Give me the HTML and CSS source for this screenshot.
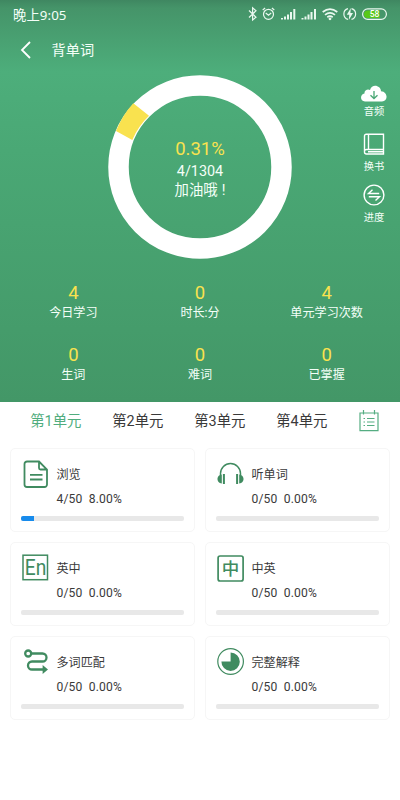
FILE: index.html
```html
<!DOCTYPE html>
<html lang="zh-CN">
<head>
<meta charset="utf-8">
<meta name="viewport" content="width=device-width, initial-scale=1">
<title>背单词</title>
<link rel="stylesheet" href="styles.css">
</head>
<body>
<section class="hero">
  <div class="status">
    <span class="clock">晚上9:05</span>
    <svg class="status-icons" width="144" height="16" viewBox="0 0 144 16" fill="none" stroke="#e9f8ef" stroke-width="1.2">
      <path d="M1 4.5l7 6.7L4.6 14V1.8L8 4.8l-7 6.7"/>
      <circle cx="20.500" cy="8.300" r="5"/><path d="M17.700 7l2.800 2.200L23.200 7M14.700 4l2.400-2M26.300 4l-2.400-2"/>
      <path stroke-width="2" d="M34 13.500v-1.500M37 13.500v-3M40 13.500v-5M43 13.500v-7.500M46.300 13.500V3M54.500 13.500v-1.500M57.500 13.500v-3M60.500 13.500v-5M63.500 13.500v-7.500M67 13.500V3"/>
      <path stroke-width="1.700" d="M74.700 6q7.300-5.600 14.600 0M77 8.800q5-4 10 0M79.300 11.200q2.700-2 5.400 0"/><circle cx="82" cy="12.800" r=".8" fill="#e9f8ef"/>
      <path d="M100 2.600a5.600 5.600 0 0 0 0 10.800M103.500 2.600a5.600 5.600 0 0 1 0 10.800"/><path stroke="none" fill="#e9f8ef" d="M102.800 2l-4 6.700h2.500L100.800 14l4.200-7h-2.600z"/>
      <rect x="114.600" y="2.900" width="23.800" height="10.500" rx="5.200"/>
      <path stroke="none" fill="#58c818" d="M116 8.200a3.800 3.800 0 0 1 3.800-3.800H131.500V12H119.800A3.800 3.800 0 0 1 116 8.200z"/>
      <text class="battery" x="126.500" y="11.300" text-anchor="middle">58</text>
    </svg>
  </div>
  <header class="bar">
    <svg width="12" height="18" viewBox="0 0 12 18" fill="none" stroke="#fff" stroke-width="1.800"><path d="M10 1L2 9l8 8"/></svg>
    <h1>背单词</h1>
  </header>
  <div class="overview">
    <div class="ring">
      <svg width="184" height="184" viewBox="-92 -92 184 184" fill="none">
        <circle r="81.500" stroke="#fff" stroke-width="20.500"/>
        <path fill="#f9e24f" d="M-84-36A92 92 0 0 1-66.700-63.700L-51-51.300A72 72 0 0 0-67.700-27z"/>
      </svg>
      <div class="ring-text"><b>0.31%</b><span>4/1304</span><span>加油哦<i>!</i></span></div>
    </div>
    <nav class="side">
      <a><svg width="28" height="22" viewBox="0 0 28 22"><path fill="#fff" d="M5 18.500C-.2 18.500-.2 11 4.500 10.500 4 7 8 5.500 10 7 12-.2 21 2.500 21 8.200c7.200.5 7.300 10.300 1 10.300z"/><path d="M14 8v7.500m-3.500-3.300L14 15.500l3.500-3.300" fill="none" stroke="#4aa775" stroke-width="1.300"/></svg>音频</a>
      <a><svg width="22" height="24" viewBox="0 0 22 24" fill="none" stroke="#fff" stroke-width="1.400"><path d="M20.500 17.500V2.200H3.200a1.700 1.700 0 0 0-1.700 1.700V20a2 2 0 0 0 2 2h17v-4.500h-17a2 2 0 0 0-2 2M5.500 2.200v15.300M5 19.800h15"/></svg>换书</a>
      <a><svg width="22" height="22" viewBox="0 0 22 22" fill="none" stroke="#fff" stroke-width="1.400"><circle cx="11" cy="11" r="9.900"/><path d="M16.200 9.500H5.500L9.500 5.700M5.800 12.700h10.700l-4 3.800"/></svg>进度</a>
    </nav>
  </div>
  <div class="stats">
    <div><b>4</b><span>今日学习</span></div>
    <div><b>0</b><span>时长:分</span></div>
    <div><b>4</b><span>单元学习次数</span></div>
    <div><b>0</b><span>生词</span></div>
    <div><b>0</b><span>难词</span></div>
    <div><b>0</b><span>已掌握</span></div>
  </div>
</section>
<nav class="tabs">
  <a class="active">第1单元</a><a>第2单元</a><a>第3单元</a><a>第4单元</a>
  <svg width="20" height="22" viewBox="0 0 20 22" fill="none" stroke="#55ad82" stroke-width="1.200"><path d="M1 3h18v17.700H1zM4.500 0v4.500M15.500 0v4.500M4.500 8.500H6M8 8.500h7.500M4.500 12H6M8 12h7.500M4.500 15.500H6M8 15.500h7.500"/></svg>
</nav>
<main class="cards">
  <article class="card">
    <svg width="28" height="28" viewBox="0 0 28 28" fill="none" stroke="#408b60" stroke-width="1.800"><path d="M6 1.500h12l8 8v15a2.500 2.500 0 0 1-2.500 2.500H6a2.500 2.500 0 0 1-2.500-2.500V4A2.500 2.500 0 0 1 6 1.500zM18 2v6a1.500 1.500 0 0 0 1.500 1.500h6M9 14.800h12.500M9 19.500h12.500"/></svg>
    <div class="info"><h2>浏览</h2><p>4/50&nbsp; 8.00%</p></div>
    <div class="track"><i style="width:8%"></i></div>
  </article>
  <article class="card">
    <svg width="28" height="28" viewBox="0 0 28 28" fill="none" stroke="#408b60"><path stroke-width="1.500" d="M4.500 15v-1.500a10 10 0 0 1 20 0V15"/><path stroke-width="2" d="M7.900 14v10M21.100 14v10"/><path fill="#408b60" stroke="none" d="M5.800 14.500v9C0 23 0 15 5.800 14.500zM23.200 14.500v9c5.800-.5 5.800-8.500 0-9z"/></svg>
    <div class="info"><h2>听单词</h2><p>0/50&nbsp; 0.00%</p></div>
    <div class="track"></div>
  </article>
  <article class="card">
    <svg width="28" height="28" viewBox="0 0 28 28"><rect x="2" y="1.200" width="24.500" height="24.500" fill="none" stroke="#408b60" stroke-width="1.500"/><text class="glyph-en" x="3.800" y="21.200" textLength="21.500" lengthAdjust="spacingAndGlyphs">En</text></svg>
    <div class="info"><h2>英中</h2><p>0/50&nbsp; 0.00%</p></div>
    <div class="track"></div>
  </article>
  <article class="card">
    <svg width="28" height="28" viewBox="0 0 28 28"><rect x="2.100" y="2" width="25" height="25" rx="2" fill="none" stroke="#408b60" stroke-width="1.700"/><text class="glyph-zh" x="14.600" y="20.800" text-anchor="middle">中</text></svg>
    <div class="info"><h2>中英</h2><p>0/50&nbsp; 0.00%</p></div>
    <div class="track"></div>
  </article>
  <article class="card">
    <svg width="28" height="28" viewBox="0 0 28 28" fill="none" stroke="#408b60" stroke-width="2.300"><circle cx="7.200" cy="5.500" r="3"/><path d="M10.200 5.500H21.500a4 4 0 0 1 0 8H11a4 4 0 0 0 0 8H22.500"/><path fill="#408b60" stroke="none" d="M21.600 17l5.400 4.500-5.400 4.500z"/></svg>
    <div class="info"><h2>多词匹配</h2><p>0/50&nbsp; 0.00%</p></div>
    <div class="track"></div>
  </article>
  <article class="card">
    <svg width="28" height="28" viewBox="0 0 28 28"><circle cx="14.600" cy="13.500" r="12.800" fill="none" stroke="#408b60" stroke-width="1.200"/><path fill="#408b60" d="M14.600 13.500V4.500a9.200 9.200 0 1 1-9.200 9z"/></svg>
    <div class="info"><h2>完整解释</h2><p>0/50&nbsp; 0.00%</p></div>
    <div class="track"></div>
  </article>
</main>
</body>
</html>
```
FILE: styles.css
```css
* { box-sizing: border-box; margin: 0; padding: 0; }
body {
  width: 400px;
  height: 800px;
  background: #fff;
  color: #3a3a3a;
  font-family: Roboto, "Noto Sans CJK SC", sans-serif;
  overflow: hidden;
}
svg { display: block; flex: none; }
b, i { font-weight: 400; font-style: normal; }

.hero {
  height: 402px;
  color: #f4fff8;
  background: linear-gradient(#3f8761 0, #459469 8px, #4dae7b 72px, #4aa875 150px, #439767 402px);
}
.status {
  height: 30px;
  padding: 0 12px 0 13px;
  display: flex;
  align-items: center;
  justify-content: space-between;
  font-size: 13px;
}
.clock { line-height: 28px; font-size: 13.300px; letter-spacing: .1px; font-family: "Noto Sans", "Noto Sans CJK SC", sans-serif; }
.status-icons { margin: -2px -4px 0 0; }
.battery { font: 500 8.500px Roboto, sans-serif; fill: #fff; stroke: none; }
.bar { height: 40px; padding-left: 20px; display: flex; align-items: center; gap: 19.500px; }
.bar h1 { font-size: 14.200px; font-weight: 400; line-height: 20px; }

.overview { display: grid; grid-template-columns: 52px 1fr 52px; height: 205px; }
.ring { grid-column: 2; justify-self: center; width: 184px; height: 184px; margin-top: 5px; display: grid; }
.ring > * { grid-area: 1 / 1; }
.ring-text { display: flex; flex-direction: column; align-items: center; padding-top: 62px; font-size: 14.400px; line-height: 18px; }
.ring-text b { color: #f9e24f; font-size: 18.500px; line-height: 24px; }
.ring-text span:nth-child(2) { line-height: 21px; }
.ring-text i { margin-left: 4px; }
.side { padding-top: 13px; display: flex; flex-direction: column; align-items: center; }
.side a { display: flex; flex-direction: column; align-items: center; font-size: 10.300px; line-height: 12px; }
.side a svg { height: 22px; margin-bottom: 1px; }
.side a:nth-child(2) { margin-top: 14px; }
.side a:nth-child(2) svg { height: 24px; margin-bottom: 5px; }
.side a:nth-child(3) { margin-top: 11px; }
.side a:nth-child(3) svg { margin-bottom: 6px; }

.stats { padding: 6px 10px 0; display: grid; grid-template-columns: repeat(3, 1fr); grid-auto-rows: 61.500px; text-align: center; }
.stats b { display: block; color: #f9e24f; font-size: 18.500px; line-height: 24px; }
.stats span { display: block; font-size: 12.100px; line-height: 17px; }

.tabs { height: 46px; padding: 0 21px 8px 14.800px; display: flex; align-items: center; font-size: 14.400px; }
.tabs a { width: 82px; margin-top: -3px; text-align: center; }
.tabs .active { color: #50ad7e; }
.tabs svg { margin: -1px 0 0 auto; }

.cards { padding: 0 10px; display: grid; grid-template-columns: 1fr 1fr; grid-auto-rows: 84px; gap: 9.800px 10px; }
.card {
  border: 1px solid #f6f6f6;
  border-radius: 5px;
  padding: 11px 10px 0;
  display: grid;
  grid-template-columns: 28px 1fr;
  grid-template-rows: 56px 6px;
  column-gap: 7.500px;
}
.card h2 { font-size: 12.100px; font-weight: 400; line-height: 24px; padding-top: 3px; }
.card p { font-size: 12.100px; line-height: 24px; letter-spacing: .15px; }
.track { grid-column: 1 / 3; height: 5px; border-radius: 2px; background: #e8e8e8; overflow: hidden; }
.track i { display: block; height: 5px; background: #178bec; }
.glyph-en { font: 400 21.500px Roboto, sans-serif; fill: #408b60; }
.glyph-zh { font: 500 17.500px "Noto Sans CJK SC", sans-serif; fill: #408b60; }
```
